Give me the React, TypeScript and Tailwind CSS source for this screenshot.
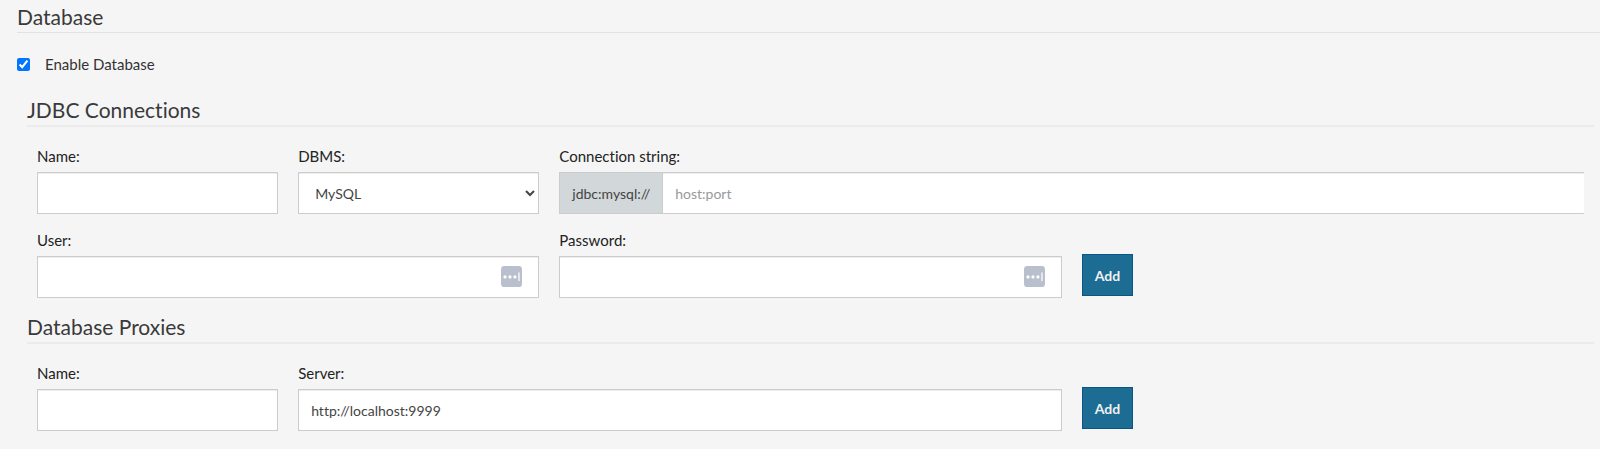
import type { ComponentProps, ReactNode } from 'react';

const control =
  'block h-[42px] w-full min-w-0 rounded-none border border-[#ccc] bg-white px-3 text-[14px] text-[#444] shadow-[inset_0_1px_1px_rgba(0,0,0,0.075)] outline-none placeholder:text-[#999] focus:border-[#1c6c93]';

function SectionHeading({ children }: { children: ReactNode }) {
  return (
    <h3 className="border-b-2 border-[#ebebeb] text-[21px] leading-[30px] text-[#3a3a3a]">{children}</h3>
  );
}

function Field({ id, label, span, children }: { id: string; label: string; span: string; children: ReactNode }) {
  return (
    <div className={span}>
      <label htmlFor={id} className="mb-1 block text-[15px] leading-6 text-[#222]">
        {label}
      </label>
      {children}
    </div>
  );
}

function CredentialInput(props: ComponentProps<'input'>) {
  return (
    <div className="relative">
      <input {...props} className={control} />
      <svg
        viewBox="0 0 22 22"
        className="pointer-events-none absolute top-[10px] right-[17px] h-[21px] w-[21px]"
        aria-hidden="true"
      >
        <rect x="0" y="0" width="22" height="22" rx="3.5" fill="#b9bfcc" />
        <circle cx="4.2" cy="11.4" r="1.7" fill="#fff" />
        <circle cx="9.4" cy="11.4" r="1.7" fill="#fff" />
        <circle cx="14.6" cy="11.4" r="1.7" fill="#fff" />
        <rect x="18.2" y="6.8" width="1.3" height="9" fill="#fff" />
      </svg>
    </div>
  );
}

function AddButton() {
  return (
    <button
      type="button"
      className="mb-0.5 h-[42px] cursor-pointer justify-self-start border border-[#0b5585] bg-[#1c6c93] px-3 text-[14px] font-bold text-[#f0f0f0]"
    >
      Add
    </button>
  );
}

export default function App() {
  return (
    <main className="min-h-screen bg-[#f5f5f5] pt-0.5 pb-4 pl-[17px] font-['Lato',sans-serif] [font-variant-ligatures:none]">
      <h2 className="border-b border-[#e2e2e2] text-[21px] leading-[30px] text-[#3a3a3a]">Database</h2>

      <div className="my-[19px] flex h-6 items-center gap-[15px]">
        <input id="enable-database" type="checkbox" defaultChecked className="h-[13px] w-[13px] accent-[#0075ff]" />
        <label htmlFor="enable-database" className="text-[15px] leading-6 text-[#333]">
          Enable Database
        </label>
      </div>

      <div className="mr-1.5 ml-2.5 flex flex-col gap-[14px]">
        <section>
          <SectionHeading>JDBC Connections</SectionHeading>
          <form className="mt-[17px] grid grid-cols-12 items-end gap-x-5 gap-y-[14px] px-2.5">
            <Field id="connection-name" label="Name:" span="col-span-2">
              <input id="connection-name" type="text" className={control} />
            </Field>
            <Field id="connection-dbms" label="DBMS:" span="col-span-2">
              <select id="connection-dbms" className={control}>
                <option>MySQL</option>
              </select>
            </Field>
            <Field id="connection-string" label="Connection string:" span="col-span-8">
              <div className="flex">
                <span className="flex shrink-0 items-center border border-r-0 border-[#ccc] bg-[#d2d7d9] px-3 text-[14px] text-[#444]">
                  jdbc:mysql://
                </span>
                <input
                  id="connection-string"
                  type="text"
                  placeholder="host:port"
                  className={`${control} border-r-0`}
                />
              </div>
            </Field>
            <Field id="connection-user" label="User:" span="col-span-4">
              <CredentialInput id="connection-user" type="text" />
            </Field>
            <Field id="connection-password" label="Password:" span="col-span-4">
              <CredentialInput id="connection-password" type="password" />
            </Field>
            <AddButton />
          </form>
        </section>

        <section>
          <SectionHeading>Database Proxies</SectionHeading>
          <form className="mt-[17px] grid grid-cols-12 items-end gap-x-5 px-2.5">
            <Field id="proxy-name" label="Name:" span="col-span-2">
              <input id="proxy-name" type="text" className={control} />
            </Field>
            <Field id="proxy-server" label="Server:" span="col-span-6">
              <input id="proxy-server" type="text" defaultValue="http://localhost:9999" className={control} />
            </Field>
            <AddButton />
          </form>
        </section>
      </div>
    </main>
  );
}
